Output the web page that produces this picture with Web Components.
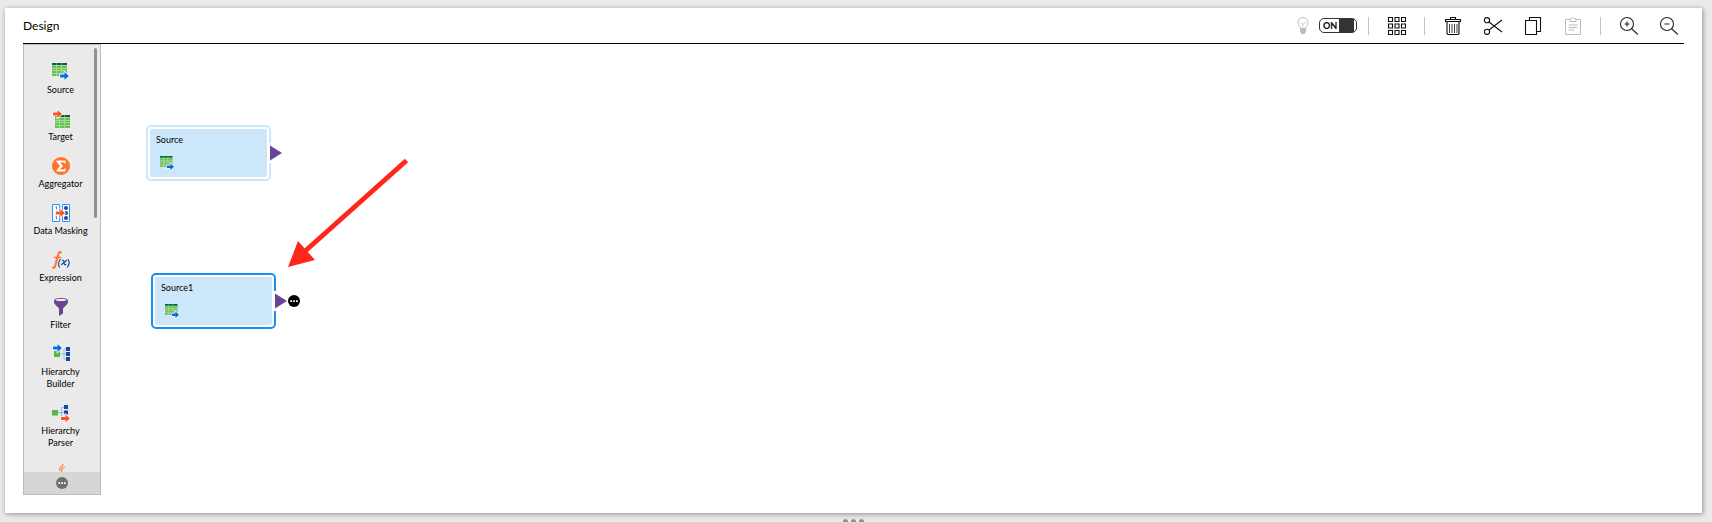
<!DOCTYPE html>
<html lang="en">
<head>
<meta charset="utf-8">
<title>Design</title>
<style>
html,body{margin:0;height:100%}
body{background:#eaeaea;color:#000;font-family:Lato,"Liberation Sans",sans-serif;overflow:hidden}
</style>
</head>
<body>
<mapping-designer></mapping-designer>
<script>
const table = (x, y) => `<g transform="translate(${x} ${y})"><rect width="15" height="13" fill="#a5d99a"/><path d="M0 0h15v2H0z" fill="#00653b"/><path d="M0 3h4v2H0zM5 3h4v2H5zM10 3h5v2h-5zM0 6h4v1H0zM5 6h4v1H5zM10 6h5v1h-5zM0 8h4v2H0zM5 8h4v2H5zM10 8h5v2h-5zM0 11h4v2H0zM5 11h4v2H5zM10 11h5v2h-5z" fill="#66bf59"/><path d="M4.500 0v2M9.500 0v2" stroke="#5aa07c"/></g>`;
const arrow = (x, y, c) => `<path transform="translate(${x} ${y})" d="M0 2.500h4.500V0L9 4 4.500 8V5.500H0z" fill="${c}" stroke="#fff" stroke-width="1.600" paint-order="stroke"/>`;
const ICONS = {
  source: table(0, 0) + arrow(8, 9, '#0a6cdf'),
  target: table(3, 5) + arrow(1, 0, '#ff5326'),
  aggregator: `<circle cx="9" cy="9" r="9" fill="#ff7429"/><path d="M4.500 3.500h9v3.500H13l-.8-1.500H8L11 9l-3.300 3.500h4.500l.8-1.500h.5v3.500h-9V13.300L8 9 4.500 4.700z" fill="#fff"/>`,
  masking: `<path d="M.5.5h7v17h-7zM10.500.5h7v17h-7z" fill="#fff" stroke="#2196f3"/><path d="M3.500 3l1-.5v3M3 8h2L3 10.500h2M3.500 13l1-.5v3" fill="none" stroke="#6b7fa8"/><circle cx="14" cy="4" r="2" fill="#17479e"/><circle cx="14" cy="9" r="2" fill="#17479e"/><circle cx="14" cy="14" r="2" fill="#17479e"/>${arrow(4, 5, '#ff5326')}`,
  expression: `<g fill="none" stroke-linecap="round"><path d="M9 1.500C7.500.5 6.500 1.500 6 4L3.500 14C3 16.500 2 17 1 16.500" stroke="#ff7429" stroke-width="2"/><path d="M2.500 6.500h6" stroke="#ff7429" stroke-width="1.600"/><path d="M8.300 8.500q-3 4 -1 7.500M16 8.500q2.600 3.500 -.5 7.500M10.500 9.500q1.500-.5 1.500 2t2 2M14.500 9.500l-5 4" stroke="#17479e" stroke-width="1.200"/></g>`,
  filter: `<path d="M2 2v2c0 3 5 5 5 7v7l4-2.500V11c0-2 5-4 5-7V2z" fill="#6a4495"/><ellipse cx="9" cy="2" rx="6.500" ry="1.500" fill="#fff" stroke="#6a4495"/>`,
  builder: `<path d="M8 9h6M15 4h-3v10h3" fill="none" stroke="#7cc4f5"/><path d="M2 6h6v6H2z" fill="#55b948"/><path d="M14 2h4v4h-4zM14 7h4v4h-4zM14 12h4v4h-4z" fill="#17479e"/>${arrow(1, -1, '#0a6cdf')}`,
  parser: `<path d="M6 8.500h6M13 3.500H9.500v9" fill="none" stroke="#7cc4f5"/><path d="M0 6h6v5.500H0z" fill="#55b948"/><path d="M12 1h4v4h-4zM12 6.500h4v4h-4z" fill="#17479e"/>${arrow(9, 10.500, '#ff5326')}`,
  java: `<path d="M11 1c1 2-5 3-3 7M13 4c-3 1-4 3-3 5M5 12h8M6 15h6" fill="none" stroke="#ff8a3c" stroke-width="1.300"/>`,
  bulb: `<g fill="none" stroke="#bcbcbc"><path d="M6.500 11.500c0-2.500-2.500-3-2.500-6a5 5 0 0 1 10 0c0 3-2.500 3.500-2.500 6z"/><path d="M7 5l1 2h2l1-2M9 7v4" stroke-width=".6"/></g><path d="M6 11h6v3.500L10.500 17h-3L6 14.500z" fill="#bcbcbc"/>`,
  grid: `<path d="M.5.5h4v4h-4zM7 .5h4v4H7zM13.500.5h4v4h-4zM.5 7h4v4h-4zM7 7h4v4H7zM13.500 7h4v4h-4zM.5 13.500h4v4h-4zM7 13.500h4v4H7zM13.500 13.500h4v4h-4z" fill="none" stroke="#111" stroke-width="1.100"/>`,
  trash: `<path d="M1.500 2.500h15v2h-15zM6.500 2.500v-2h5v2M3 4.500v12l1 1h10l1-1v-12" fill="none" stroke="#111" stroke-width="1.100"/><path d="M5.500 7v9M8 7v9M10.500 7v9M13 7v9" stroke="#111" stroke-width=".8"/>`,
  cut: `<g fill="none" stroke="#111" stroke-width="1.100"><circle cx="3" cy="3.200" r="2.600"/><circle cx="3" cy="14.800" r="2.600"/><path d="M5 5L18 15M5 13L18 3"/></g>`,
  copy: `<path d="M1.500 3.500h11v14h-11zM5.500 3.500v-3h11v14h-4" fill="none" stroke="#111" stroke-width="1.100"/>`,
  paste: `<path d="M6 2.500H1.500v15h15v-15H12M6 4.500v-3h1.500L9 .5l1.500 1H12v3zM4.500 8h9M4.500 10.500h9M4.500 13h6" fill="none" stroke="#bcbcbc"/>`,
  zoomin: `<g fill="none" stroke="#222" stroke-width="1.100"><circle cx="7" cy="7" r="6.500"/><path d="M11.500 11.500l6.300 6M4.500 7h5M7 4.500v5"/></g>`,
  zoomout: `<g fill="none" stroke="#222" stroke-width="1.100"><circle cx="7" cy="7" r="6.500"/><path d="M11.500 11.500l6.300 6M4.500 7h5"/></g>`
};

class Base extends HTMLElement {
  connectedCallback() {
    if (!this.shadowRoot) this.attachShadow({ mode: 'open' }).innerHTML = this.view();
  }
}

customElements.define('app-icon', class extends Base {
  view() {
    return `<style>:host{display:block;width:18px;height:18px}svg{display:block;width:100%;height:100%;overflow:visible}</style>
    <svg viewBox="0 0 18 18" aria-hidden="true">${ICONS[this.getAttribute('name')]}</svg>`;
  }
});

customElements.define('more-dots', class extends Base {
  view() {
    return `<style>:host{display:block;width:12px;height:12px}button{display:block;border:0;padding:0;background:none;width:100%;height:100%;color:inherit}svg{display:block;width:100%;height:100%}</style>
    <button aria-label="More"><svg viewBox="0 0 12 12"><circle cx="6" cy="6" r="6" fill="currentColor"/><path d="M2.300 5.200h1.700v1.700H2.300zM5.200 5.200h1.700v1.700H5.200zM8.100 5.200h1.700v1.700H8.100z" fill="#fff"/></svg></button>`;
  }
});

customElements.define('tool-button', class extends Base {
  view() {
    const off = this.hasAttribute('disabled') ? 'disabled' : '';
    return `<style>:host{display:block}button{display:flex;justify-content:center;align-items:center;width:20px;height:20px;padding:0;border:0;background:none}</style>
    <button aria-label="${this.getAttribute('label')}" ${off}><app-icon name="${this.getAttribute('icon')}"></app-icon></button>`;
  }
});

customElements.define('toggle-switch', class extends Base {
  view() {
    return `<style>
    :host{display:block}
    label{box-sizing:border-box;display:flex;align-items:center;justify-content:space-between;width:38px;height:15px;padding:0 2px 0 3px;border:1px solid #333;border-radius:5px;font-size:9px;line-height:13px;font-weight:900;color:#111}
    input{appearance:none;width:15px;height:13px;margin:0;background:#333}
    </style><label><slot></slot><input type="checkbox" role="switch" checked></label>`;
  }
});

customElements.define('design-toolbar', class extends Base {
  view() {
    return `<style>
    :host{display:flex;align-items:center;justify-content:space-between;height:35px;border-bottom:1px solid #000}
    h1{margin:0;font-size:12px;line-height:16px;font-weight:400}
    .tools,.group{display:flex;align-items:center}
    .tools{padding-right:5px}
    .group{gap:20px}
    .hint{gap:6px;margin-right:-6px}
    hr{width:1px;height:18px;margin:0 18px 0 17px;border:0;background:#c4c4c4}
    </style>
    <h1>Design</h1>
    <div class="tools" role="toolbar" aria-label="Design tools">
      <div class="group hint"><tool-button icon="bulb" label="Recommendations" disabled></tool-button><toggle-switch>ON</toggle-switch></div>
      <hr>
      <tool-button icon="grid" label="Arrange all"></tool-button>
      <hr>
      <div class="group"><tool-button icon="trash" label="Delete"></tool-button><tool-button icon="cut" label="Cut"></tool-button><tool-button icon="copy" label="Copy"></tool-button><tool-button icon="paste" label="Paste" disabled></tool-button></div>
      <hr>
      <div class="group"><tool-button icon="zoomin" label="Zoom in"></tool-button><tool-button icon="zoomout" label="Zoom out"></tool-button></div>
    </div>`;
  }
});

customElements.define('palette-item', class extends Base {
  view() {
    return `<style>
    :host{display:block}
    button{display:flex;flex-direction:column;align-items:center;gap:3px;width:100%;padding:0;border:0;background:none;color:#000;font:400 9px/12px Lato,"Liberation Sans",sans-serif}
    span{max-width:60px;min-height:12px}
    </style><button><app-icon name="${this.getAttribute('icon')}"></app-icon><span><slot></slot></span></button>`;
  }
});

customElements.define('transformation-palette', class extends Base {
  view() {
    return `<style>
    :host{box-sizing:border-box;position:relative;display:flex;flex-direction:column;width:78px;min-height:0;border:1px solid #bdbdbd;background:#eaeaea}
    nav{flex:1;min-height:0;overflow:hidden;display:flex;flex-direction:column;gap:14px;padding:18px 3px 0 0}
    palette-item{flex:none}
    footer{flex:none;display:flex;justify-content:center;align-items:center;height:22px;background:#d6d6d6;color:#6e6e6e}
    .thumb{position:absolute;top:3px;right:3px;width:3px;height:170px;border-radius:2px;background:#919191}
    </style>
    <nav aria-label="Transformations">
      <palette-item icon="source">Source</palette-item>
      <palette-item icon="target">Target</palette-item>
      <palette-item icon="aggregator">Aggregator</palette-item>
      <palette-item icon="masking">Data Masking</palette-item>
      <palette-item icon="expression">Expression</palette-item>
      <palette-item icon="filter">Filter</palette-item>
      <palette-item icon="builder">Hierarchy<br>Builder</palette-item>
      <palette-item icon="parser">Hierarchy<br>Parser</palette-item>
      <palette-item icon="java"></palette-item>
    </nav>
    <div class="thumb"></div>
    <footer><more-dots></more-dots></footer>`;
  }
});

customElements.define('flow-node', class extends Base {
  view() {
    return `<style>
    :host{box-sizing:border-box;display:block;width:125px;height:56px;padding:2px;border:2px solid #cce6fa;border-radius:5px;background:#fff}
    :host([selected]){border-color:#1790f5}
    .card{box-sizing:border-box;height:100%;padding:5px 6px;border-radius:2px;background:#cce6fa;font-size:9px;line-height:12px;color:#000}
    app-icon{width:15px;height:15px;margin:10px 0 0 4px}
    .port{position:absolute;left:120px;top:16px;display:flex;align-items:center;gap:1px}
    .port svg{display:block}
    </style>
    <div class="card"><slot></slot><app-icon name="source"></app-icon></div>
    <div class="port"><svg width="14" height="20" viewBox="0 0 14 20"><path d="M0 0h4v20H0z" fill="#fff"/><path d="M2 2.500L14 10 2 17.500z" fill="#6a4495"/></svg>${this.hasAttribute('selected') ? '<more-dots></more-dots>' : ''}</div>`;
  }
});

customElements.define('flow-canvas', class extends Base {
  view() {
    return `<style>
    :host{display:block;position:relative;flex:1;min-width:0;overflow:hidden}
    flow-node,.pointer{position:absolute}
    .first{left:45px;top:81px}
    .second{left:50px;top:229px}
    .second more-dots{width:13px}
    .pointer{left:185px;top:112px}
    </style>
    <flow-node class="first">Source</flow-node>
    <flow-node class="second" selected>Source1</flow-node>
    <svg class="pointer" width="126" height="114" viewBox="0 0 126 114" aria-hidden="true"><path d="M120.500 4.500L17 97" stroke="#ff261c" stroke-width="5"/><path d="M12 85L2 111l27-7z" fill="#ff261c"/></svg>`;
  }
});

customElements.define('mapping-designer', class extends Base {
  view() {
    return `<style>
    :host{box-sizing:border-box;display:flex;flex-direction:column;height:100vh;padding:8px 10px 0 5px;overflow:hidden}
    main{box-sizing:border-box;flex:1;min-height:0;display:flex;flex-direction:column;padding:0 18px 18px;background:#fff;box-shadow:1px 1px 5px rgba(0,0,0,.4)}
    design-toolbar{flex:none}
    .work{flex:1;min-height:0;display:flex}
    .splitter{flex:none;display:flex;justify-content:center;gap:3px;height:3px;padding-top:6px;overflow:hidden}
    .splitter i{flex:none;width:5px;height:5px;border-radius:50%;background:#919191}
    </style>
    <main><design-toolbar></design-toolbar><div class="work"><transformation-palette></transformation-palette><flow-canvas></flow-canvas></div></main>
    <div class="splitter"><i></i><i></i><i></i></div>`;
  }
});
</script>
</body>
</html>
